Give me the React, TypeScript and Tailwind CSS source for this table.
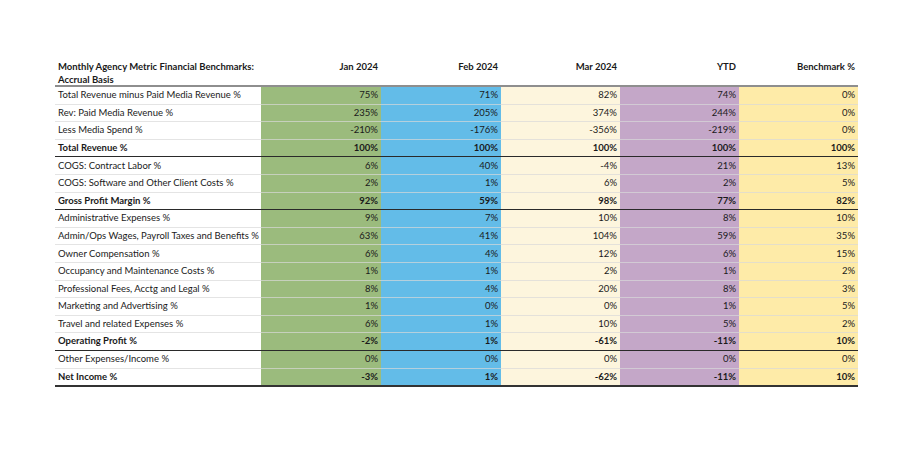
import React from "react";

type Row = { label: string; v: string[]; bold?: boolean; line?: "dark" | "end" };

const rows: Row[] = [
  { label: "Total Revenue minus Paid Media Revenue %", v: ["75%", "71%", "82%", "74%", "0%"] },
  { label: "Rev: Paid Media Revenue %", v: ["235%", "205%", "374%", "244%", "0%"] },
  { label: "Less Media Spend %", v: ["-210%", "-176%", "-356%", "-219%", "0%"] },
  { label: "Total Revenue %", v: ["100%", "100%", "100%", "100%", "100%"], bold: true, line: "dark" },
  { label: "COGS: Contract Labor %", v: ["6%", "40%", "-4%", "21%", "13%"] },
  { label: "COGS: Software and Other Client Costs %", v: ["2%", "1%", "6%", "2%", "5%"] },
  { label: "Gross Profit Margin %", v: ["92%", "59%", "98%", "77%", "82%"], bold: true, line: "dark" },
  { label: "Administrative Expenses %", v: ["9%", "7%", "10%", "8%", "10%"] },
  { label: "Admin/Ops Wages, Payroll Taxes and Benefits %", v: ["63%", "41%", "104%", "59%", "35%"] },
  { label: "Owner Compensation %", v: ["6%", "4%", "12%", "6%", "15%"] },
  { label: "Occupancy and Maintenance Costs %", v: ["1%", "1%", "2%", "1%", "2%"] },
  { label: "Professional Fees, Acctg and Legal %", v: ["8%", "4%", "20%", "8%", "3%"] },
  { label: "Marketing and Advertising %", v: ["1%", "0%", "0%", "1%", "5%"] },
  { label: "Travel and related Expenses %", v: ["6%", "1%", "10%", "5%", "2%"] },
  { label: "Operating Profit %", v: ["-2%", "1%", "-61%", "-11%", "10%"], bold: true, line: "dark" },
  { label: "Other Expenses/Income %", v: ["0%", "0%", "0%", "0%", "0%"] },
  { label: "Net Income %", v: ["-3%", "1%", "-62%", "-11%", "10%"], bold: true, line: "end" },
];

const colBg = ["bg-[#9bbb7d]", "bg-[#63bce8]", "bg-[#fdf5dd]", "bg-[#c4a7c8]", "bg-[#feeba8]"];
const heads = ["Jan 2024", "Feb 2024", "Mar 2024", "YTD", "Benchmark %"];

export default function App() {
  return (
    <div
      className="w-[916px] h-[454px] bg-white pt-[60px] pl-[55px] text-[#1a1a1a]"
      style={{ fontFamily: "Lato, 'Noto Sans', sans-serif" }}
    >
      <div className="w-[803px] grid grid-cols-[206px_120px_120px_119px_119px_119px] text-[9.5px]">
        <div className="h-[27px] border-b-2 border-[#8e8e8e] pl-[3px] font-bold leading-[13px]">
          Monthly Agency Metric Financial Benchmarks:
          <br />
          Accrual Basis
        </div>
        {heads.map((h) => (
          <div key={h} className="h-[27px] border-b-2 border-[#8e8e8e] pr-[3px] text-right font-bold leading-[13px]">
            {h}
          </div>
        ))}
        {rows.map((r) => {
          const b =
            r.line === "dark"
              ? "border-b border-[#2a2a2a]"
              : r.line === "end"
              ? "border-b-2 border-[#333333]"
              : "border-b border-[#d8d8d8]/70";
          const h = r.line === "end" ? "h-[18.6px]" : "h-[17.6px]";
          return (
            <React.Fragment key={r.label}>
              <div className={`${h} ${b} pl-[3px] flex items-center whitespace-nowrap ${r.bold ? "font-bold" : ""}`}>
                {r.label}
              </div>
              {r.v.map((v, i) => (
                <div
                  key={i}
                  className={`${h} ${b} ${colBg[i]} pr-[3px] flex items-center justify-end ${r.bold ? "font-bold" : ""}`}
                >
                  {v}
                </div>
              ))}
            </React.Fragment>
          );
        })}
      </div>
    </div>
  );
}
